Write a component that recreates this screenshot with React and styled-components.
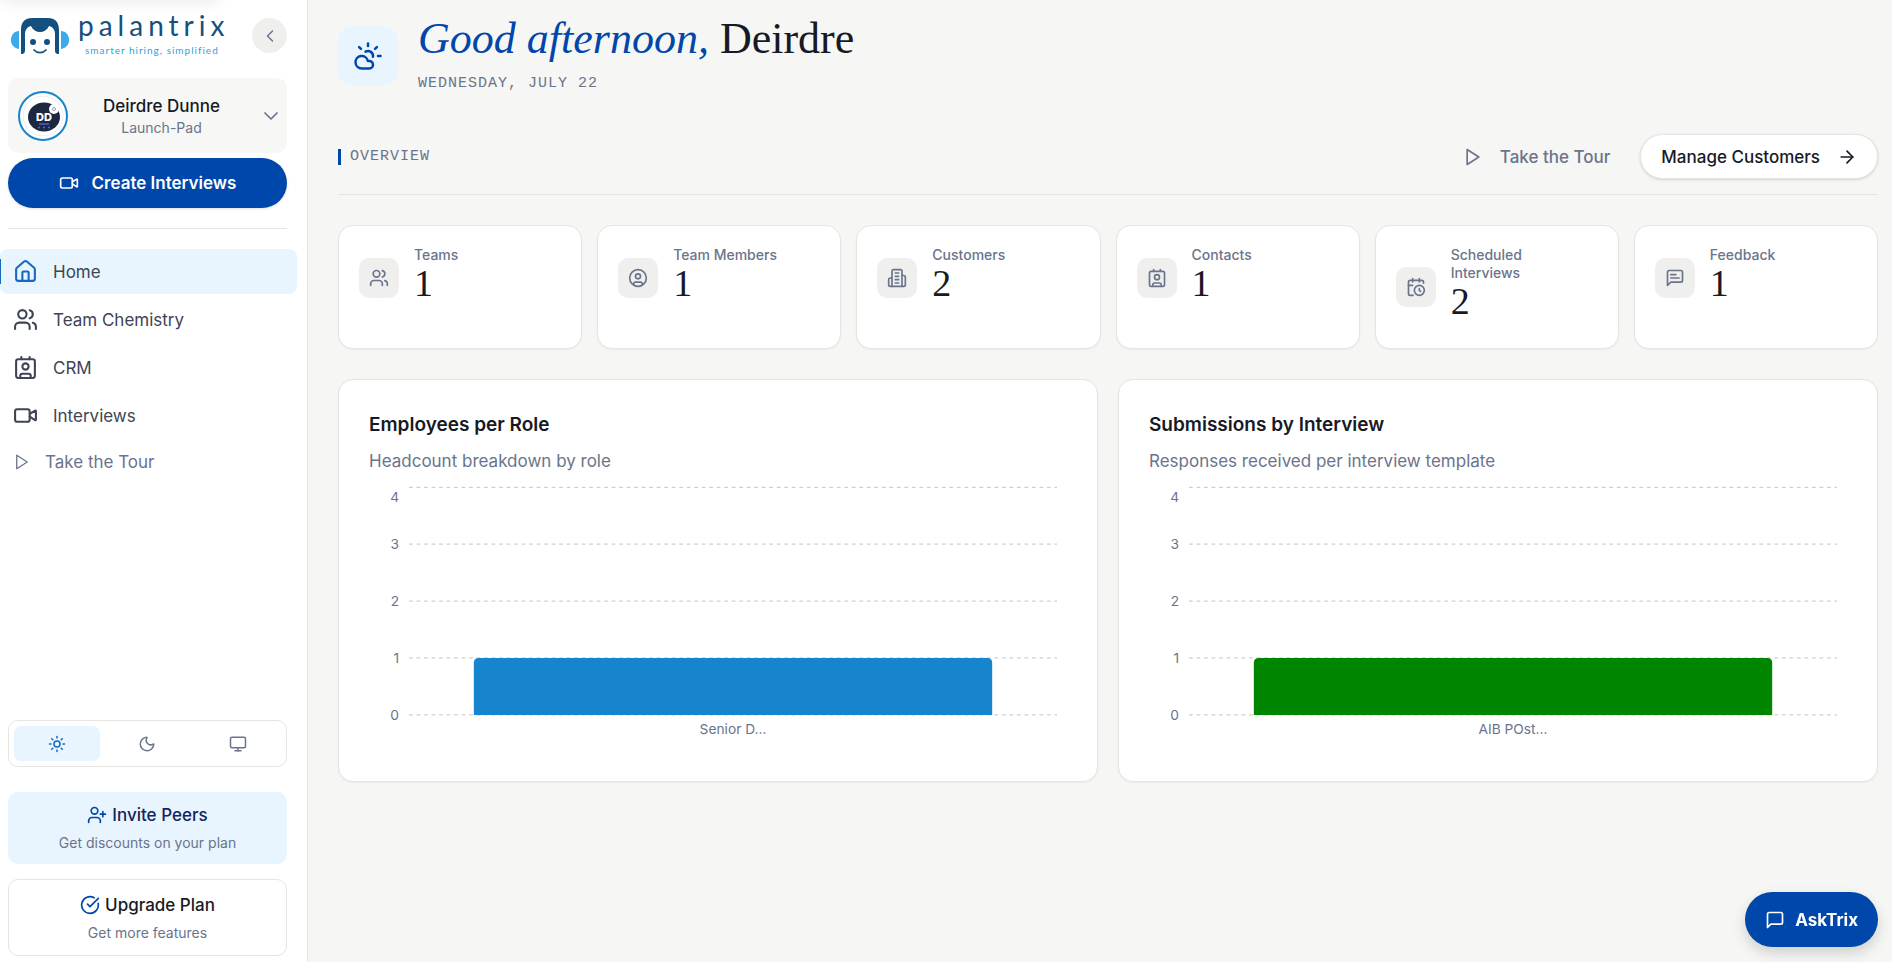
import React from "react";
import styled, { createGlobalStyle, css } from "styled-components";
import {
  ArrowRight,
  CalendarClock,
  ChevronDown,
  ChevronLeft,
  CircleCheckBig,
  CircleUser,
  CloudSun,
  Contact,
  House,
  Monitor,
  Moon,
  Sun,
  UserPlus,
  Users,
  Video,
} from "lucide-react";

const color = {
  page: "#f6f6f4",
  surface: "#ffffff",
  subtle: "#f7f7f5",
  chip: "#efefed",
  border: "#e5e5e2",
  text: "#171a24",
  nav: "#3d4454",
  muted: "#6a748b",
  brand: "#0047ab",
  sky: "#1785cd",
  active: "#1668c0",
  tint: "#e8f5fe",
};

const GlobalStyle = createGlobalStyle`
  *, *::before, *::after { box-sizing: border-box; }
  body {
    margin: 0;
    background: ${color.page};
    color: ${color.text};
    font-family: Inter, "Liberation Sans", sans-serif;
    font-size: 17px;
    line-height: 24px;
  }
  button { font: inherit; color: inherit; border: 0; background: none; padding: 0; cursor: pointer; }
  a { color: inherit; text-decoration: none; }
  h1, h2, h3, p { margin: 0; font-weight: inherit; }
  svg { flex: none; display: block; }
`;

const Shell = styled.div`
  display: grid;
  grid-template-columns: 308px minmax(0, 1fr);
  align-items: start;
  min-height: 100vh;
`;

/* ---------- sidebar ---------- */

const Sidebar = styled.aside`
  position: sticky;
  top: 0;
  display: flex;
  flex-direction: column;
  height: 100vh;
  padding: 11px 20px 6px 8px;
  background: ${color.surface};
  border-right: 1px solid ${color.border};
  overflow: hidden;

  &::before {
    content: "";
    position: absolute;
    top: -40px;
    left: 0;
    width: 220px;
    height: 40px;
    border-radius: 10px;
    box-shadow: 0 4px 14px rgba(0, 0, 0, 0.07);
  }
`;

const BrandRow = styled.div`
  display: flex;
  align-items: flex-start;
  justify-content: space-between;
  height: 67px;
`;

const Brand = styled.a`
  display: flex;
  gap: 9px;
  padding-left: 3px;
  svg { margin-top: 7px; }
`;

const BrandText = styled.span`
  display: flex;
  flex-direction: column;
  gap: 4px;
  font-family: Lato, sans-serif;
`;

const BrandName = styled.span`
  font-size: 28px;
  line-height: 28px;
  letter-spacing: 5px;
  color: #14507f;
`;

const Tagline = styled.span`
  padding-left: 7px;
  font-size: 10px;
  line-height: 14px;
  letter-spacing: 1px;
  color: #2f9fe2;
`;

const RoundButton = styled.button`
  display: grid;
  place-items: center;
  width: 35px;
  height: 35px;
  margin-top: 7px;
  border-radius: 50%;
  background: ${color.chip};
  color: ${color.muted};
`;

const AccountButton = styled.button`
  display: flex;
  align-items: center;
  min-height: 75px;
  padding: 0 4px 0 10px;
  border-radius: 10px;
  background: ${color.subtle};
  color: ${color.muted};
`;

const AccountText = styled.span`
  flex: 1;
  display: flex;
  flex-direction: column;
  padding-right: 4px;
  font-size: 14px;
  line-height: 20px;
`;

const AccountName = styled.span`
  color: ${color.text};
  font-size: 17px;
  font-weight: 500;
  line-height: 24px;
`;

const CreateButton = styled.button`
  display: flex;
  align-items: center;
  justify-content: center;
  gap: 13px;
  min-height: 50px;
  margin-top: 5px;
  border-radius: 25px;
  background: ${color.brand};
  color: #fff;
  font-weight: 600;
  box-shadow: 0 1px 3px rgba(0, 0, 0, 0.12);
`;

const Divider = styled.hr`
  width: 100%;
  margin: 20px 0;
  border: 0;
  border-top: 1px solid ${color.border};
`;

const Nav = styled.nav`
  flex: 1;
  display: flex;
  flex-direction: column;
  gap: 3px;
  margin: 0 -10px 0 -8px;
`;

const NavLink = styled.a`
  display: flex;
  align-items: center;
  gap: ${(p) => (p.$quiet ? 14 : 15)}px;
  min-height: ${(p) => (p.$quiet ? 42 : 45)}px;
  padding-left: 13px;
  border-radius: 8px;
  color: ${(p) => (p.$quiet ? color.muted : color.nav)};

  ${(p) =>
    p.$active &&
    css`
      background: linear-gradient(${color.active}, ${color.active}) 0 50% / 1px 25px no-repeat ${color.tint};
      svg { color: ${color.active}; }
    `}
`;

const ThemeSwitch = styled.div`
  display: grid;
  grid-template-columns: repeat(3, 1fr);
  gap: 5px;
  padding: 5px;
  border: 1px solid ${color.border};
  border-radius: 10px;
`;

const ThemeButton = styled.button`
  display: grid;
  place-items: center;
  height: 35px;
  border-radius: 7px;
  color: ${(p) => (p.$active ? color.active : color.muted)};
  background: ${(p) => (p.$active ? color.tint : "transparent")};
`;

const Promo = styled.button`
  display: flex;
  flex-direction: column;
  align-items: center;
  justify-content: center;
  gap: 6px;
  min-height: ${(p) => (p.$tinted ? 72 : 77)}px;
  margin-top: ${(p) => (p.$tinted ? 25 : 15)}px;
  border: ${(p) => (p.$tinted ? "0" : `1px solid ${color.border}`)};
  border-radius: 10px;
  background: ${(p) => (p.$tinted ? color.tint : color.surface)};
  color: ${color.muted};
  font-size: 14px;
  line-height: 20px;
`;

const PromoTitle = styled.span`
  display: flex;
  align-items: center;
  gap: 5px;
  font-size: 17px;
  font-weight: 500;
  line-height: 24px;
  color: ${(p) => (p.$tinted ? "#13265c" : color.text)};
  svg { color: ${color.brand}; }
`;

/* ---------- main ---------- */

const Main = styled.main`
  display: flex;
  flex-direction: column;
  padding: 16px 14px 30px 30px;
`;

const Header = styled.header`
  display: flex;
  align-items: center;
  gap: 20px;
`;

const WeatherTile = styled.div`
  display: grid;
  place-items: center;
  width: 60px;
  height: 60px;
  border-radius: 15px;
  background: ${color.tint};
  color: ${color.brand};
`;

const Greeting = styled.h1`
  margin-bottom: 10px;
  font-family: "Liberation Serif", serif;
  font-size: 44px;
  line-height: 46px;
  em { color: ${color.brand}; }
`;

const MonoLabel = styled.p`
  font-family: "Liberation Mono", monospace;
  font-size: 15px;
  line-height: 24px;
  letter-spacing: 1px;
  text-transform: uppercase;
  color: ${color.muted};
`;

const SectionBar = styled.div`
  display: flex;
  align-items: center;
  margin-top: 38px;
  padding-bottom: 15px;
  border-bottom: 1px solid ${color.border};
`;

const SectionTitle = styled(MonoLabel).attrs({ as: "h2" })`
  flex: 1;
  padding-left: 9px;
  border-left: 3px solid ${color.brand};
  line-height: 16px;
`;

const PillButton = styled.button`
  display: flex;
  align-items: center;
  gap: 17px;
  height: 45px;
  padding: 0 20px;
  border: 1px solid transparent;
  border-radius: 23px;
  font-weight: 500;
  color: ${color.muted};

  ${(p) =>
    p.$raised &&
    css`
      margin-left: 9px;
      color: ${color.text};
      border-color: ${color.border};
      background: ${color.surface};
      box-shadow: 0 1px 3px rgba(0, 0, 0, 0.15);
    `}
`;

const StatGrid = styled.section`
  display: grid;
  grid-template-columns: repeat(6, minmax(0, 1fr));
  gap: 15px;
  margin-top: 30px;
`;

const Card = styled.article`
  border: 1px solid ${color.border};
  border-radius: 15px;
  background: ${color.surface};
  box-shadow: 0 1px 2px rgba(0, 0, 0, 0.05);
`;

const StatCard = styled(Card)`
  display: flex;
  align-items: flex-start;
  min-height: 124px;
  padding: 20px 30px 12px 20px;
`;

const StatRow = styled.div`
  display: flex;
  align-items: center;
  gap: 15px;
`;

const StatIcon = styled.span`
  display: grid;
  place-items: center;
  flex: none;
  width: 40px;
  height: 40px;
  border-radius: 10px;
  background: ${color.chip};
  color: ${color.muted};
`;

const StatLabel = styled.h3`
  font-size: 14px;
  font-weight: 500;
  line-height: 18px;
  color: ${color.muted};
`;

const StatValue = styled.p`
  margin-bottom: 8px;
  font-family: "Liberation Serif", serif;
  font-size: 38px;
  line-height: 38px;
`;

const ChartGrid = styled.section`
  display: grid;
  grid-template-columns: repeat(2, minmax(0, 1fr));
  gap: 20px;
  margin-top: 30px;
`;

const ChartCard = styled(Card)`
  display: flex;
  flex-direction: column;
  padding: 30px;
`;

const ChartTitle = styled.h3`
  margin-bottom: 9px;
  font-size: 19px;
  font-weight: 600;
  line-height: 30px;
`;

const ChartNote = styled.p`
  margin-bottom: 8px;
  color: ${color.muted};
`;

const ChartSvg = styled.svg`
  width: 100%;
  height: auto;
  font-size: 11px;
  fill: ${color.muted};
`;

const AskButton = styled.button`
  position: fixed;
  right: 14px;
  bottom: 15px;
  display: flex;
  align-items: center;
  gap: 10px;
  height: 55px;
  padding: 0 20px;
  border-radius: 28px;
  background: ${color.brand};
  color: #fff;
  font-weight: 700;
  box-shadow: 0 6px 14px rgba(0, 0, 0, 0.16);
`;

/* ---------- drawings ---------- */

const Icon = ({ size = 20, strokeWidth = 2, children }) => (
  <svg
    width={size}
    height={size}
    viewBox="0 0 24 24"
    fill="none"
    stroke="currentColor"
    strokeWidth={strokeWidth}
    strokeLinecap="round"
    strokeLinejoin="round"
    aria-hidden="true"
  >
    {children}
  </svg>
);

const PlayIcon = (props) => (
  <Icon {...props}>
    <polygon points="5 3 19 12 5 21 5 3" />
  </Icon>
);

const BuildingIcon = (props) => (
  <Icon {...props}>
    <path d="M6 22V4a2 2 0 0 1 2-2h8a2 2 0 0 1 2 2v18Z" />
    <path d="M6 12H4a2 2 0 0 0-2 2v6a2 2 0 0 0 2 2h2" />
    <path d="M18 9h2a2 2 0 0 1 2 2v9a2 2 0 0 1-2 2h-2" />
    <path d="M10 6h4M10 10h4M10 14h4M10 18h4" />
  </Icon>
);

const bubble = "M21 15a2 2 0 0 1-2 2H7l-4 4V5a2 2 0 0 1 2-2h14a2 2 0 0 1 2 2z";

const ChatIcon = (props) => (
  <Icon {...props}>
    <path d={bubble} />
  </Icon>
);

const ChatTextIcon = (props) => (
  <Icon {...props}>
    <path d={bubble} />
    <path d="M13 8H7M17 12H7" />
  </Icon>
);

const BrandMark = () => (
  <svg width="58" height="38" viewBox="0 0 58 38" aria-hidden="true">
    <path d="M8 13v18C3 30 0 27 0 22s3-9 8-9Z" fill="#3ba9ea" />
    <path d="M50 13v18c5-1 8-4 8-9s-3-9-8-9Z" fill="#3ba9ea" />
    <path d="M10 36V12C10 4 14 0 21 0h16c7 0 11 4 11 12v24c-3 0-4-1-4-4V16c0-4-2-7-6-8-2 4-5 6-9 6s-7-2-9-6c-4 1-6 4-6 8v16c0 3-1 4-4 4Z" fill="#14507f" />
    <circle cx="22" cy="24" r="3" fill="#14507f" />
    <circle cx="36" cy="24" r="3" fill="#14507f" />
    <path d="M23 32c3 3.400 9 3.400 12 0" fill="none" stroke="#14507f" strokeWidth="1.800" strokeLinecap="round" />
  </svg>
);

const Avatar = () => (
  <svg width="50" height="50" viewBox="0 0 50 50" aria-hidden="true">
    <circle cx="25" cy="25" r="24" fill="#fff" stroke={color.sky} strokeWidth="2" />
    <circle cx="25" cy="25" r="20" fill="none" stroke="#eceef2" />
    <ellipse cx="26" cy="26" rx="16" ry="14.500" fill="#1d2740" />
    <circle cx="36" cy="18" r="5" fill="#fff" />
    <circle cx="36" cy="18" r="1.500" fill="none" stroke="#9aa0ac" />
    <text x="26" y="30" textAnchor="middle" fontSize="11" fontWeight="800" fill="#fff">DD</text>
    <path d="M21 33h10" stroke="#5b5bd0" strokeWidth="1.500" />
    <g fill="#2d7fe0">
      <circle cx="21" cy="36.500" r="1" />
      <circle cx="26" cy="36.500" r="1" />
      <circle cx="31" cy="36.500" r="1" />
    </g>
  </svg>
);

const TICKS = [0, 1, 2, 3, 4];
const PLOT = { left: 32, right: 550, bottom: 187, step: 45.5 };

const BarChart = ({ label, value, fill }) => {
  const width = PLOT.right - PLOT.left;
  const barX = PLOT.left + width * 0.1;
  const barW = width * 0.8;
  const barY = PLOT.bottom - PLOT.step * value;
  return (
    <ChartSvg viewBox="0 0 558 216" role="img" aria-label={`${label}: ${value}`}>
      {TICKS.map((tick) => {
        const y = PLOT.bottom - tick * PLOT.step;
        return (
          <g key={tick}>
            <line x1={PLOT.left} x2={PLOT.right} y1={y} y2={y} stroke="#cfcfcc" strokeDasharray="3 3" />
            <text x="24" y={(tick === 4 ? y + 8 : y) + 4} textAnchor="end">{tick}</text>
          </g>
        );
      })}
      <path
        d={`M${barX} ${PLOT.bottom}V${barY + 4}q0-4 4-4h${barW - 8}q4 0 4 4V${PLOT.bottom}Z`}
        fill={fill}
      />
      <text x={PLOT.left + width / 2} y="202" textAnchor="middle">{label}</text>
    </ChartSvg>
  );
};

/* ---------- data ---------- */

const NAV = [
  { label: "Home", Glyph: House, active: true },
  { label: "Team Chemistry", Glyph: Users },
  { label: "CRM", Glyph: Contact },
  { label: "Interviews", Glyph: Video },
];

const THEMES = [
  { label: "Light theme", Glyph: Sun, active: true },
  { label: "Dark theme", Glyph: Moon },
  { label: "System theme", Glyph: Monitor },
];

const STATS = [
  { label: "Teams", value: 1, Glyph: Users },
  { label: "Team Members", value: 1, Glyph: CircleUser },
  { label: "Customers", value: 2, Glyph: BuildingIcon },
  { label: "Contacts", value: 1, Glyph: Contact },
  { label: "Scheduled Interviews", value: 2, Glyph: CalendarClock },
  { label: "Feedback", value: 1, Glyph: ChatTextIcon },
];

const CHARTS = [
  { title: "Employees per Role", note: "Headcount breakdown by role", label: "Senior D…", value: 1, fill: color.sky },
  { title: "Submissions by Interview", note: "Responses received per interview template", label: "AIB POst…", value: 1, fill: "#008500" },
];

export default function App() {
  return (
    <Shell>
      <GlobalStyle />
      <Sidebar>
        <BrandRow>
          <Brand href="#home">
            <BrandMark />
            <BrandText>
              <BrandName>palantrix</BrandName>
              <Tagline>smarter hiring, simplified</Tagline>
            </BrandText>
          </Brand>
          <RoundButton aria-label="Collapse sidebar">
            <ChevronLeft size={20} strokeWidth={1.75} />
          </RoundButton>
        </BrandRow>

        <AccountButton>
          <Avatar />
          <AccountText>
            <AccountName>Deirdre Dunne</AccountName>
            Launch-Pad
          </AccountText>
          <ChevronDown size={24} strokeWidth={1.75} />
        </AccountButton>
        <CreateButton>
          <Video size={20} strokeWidth={2} />
          Create Interviews
        </CreateButton>
        <Divider />

        <Nav aria-label="Main">
          {NAV.map(({ label, Glyph, active }) => (
            <NavLink key={label} href={`#${label}`} $active={active} aria-current={active ? "page" : undefined}>
              <Glyph size={25} strokeWidth={2} />
              {label}
            </NavLink>
          ))}
          <NavLink href="#tour" $quiet>
            <PlayIcon size={18} strokeWidth={1.75} />
            Take the Tour
          </NavLink>
        </Nav>

        <ThemeSwitch>
          {THEMES.map(({ label, Glyph, active }) => (
            <ThemeButton key={label} aria-label={label} aria-pressed={!!active} $active={active}>
              <Glyph size={18} strokeWidth={2} />
            </ThemeButton>
          ))}
        </ThemeSwitch>
        <Promo $tinted>
          <PromoTitle $tinted>
            <UserPlus size={20} strokeWidth={2} />
            Invite Peers
          </PromoTitle>
          Get discounts on your plan
        </Promo>
        <Promo>
          <PromoTitle>
            <CircleCheckBig size={20} strokeWidth={2} />
            Upgrade Plan
          </PromoTitle>
          Get more features
        </Promo>
      </Sidebar>

      <Main>
        <Header>
          <WeatherTile>
            <CloudSun size={30} strokeWidth={2} />
          </WeatherTile>
          <div>
            <Greeting>
              <em>Good afternoon,</em> Deirdre
            </Greeting>
            <MonoLabel>Wednesday, July 22</MonoLabel>
          </div>
        </Header>

        <SectionBar>
          <SectionTitle>Overview</SectionTitle>
          <PillButton>
            <PlayIcon size={20} strokeWidth={2} />
            Take the Tour
          </PillButton>
          <PillButton $raised>
            Manage Customers
            <ArrowRight size={20} strokeWidth={2} />
          </PillButton>
        </SectionBar>

        <StatGrid>
          {STATS.map(({ label, value, Glyph }) => (
            <StatCard key={label}>
              <StatRow>
                <StatIcon>
                  <Glyph size={20} strokeWidth={2} />
                </StatIcon>
                <div>
                  <StatLabel>{label}</StatLabel>
                  <StatValue>{value}</StatValue>
                </div>
              </StatRow>
            </StatCard>
          ))}
        </StatGrid>

        <ChartGrid>
          {CHARTS.map(({ title, note, ...chart }) => (
            <ChartCard key={title}>
              <ChartTitle>{title}</ChartTitle>
              <ChartNote>{note}</ChartNote>
              <BarChart {...chart} />
            </ChartCard>
          ))}
        </ChartGrid>
      </Main>

      <AskButton>
        <ChatIcon size={20} strokeWidth={2} />
        AskTrix
      </AskButton>
    </Shell>
  );
}
